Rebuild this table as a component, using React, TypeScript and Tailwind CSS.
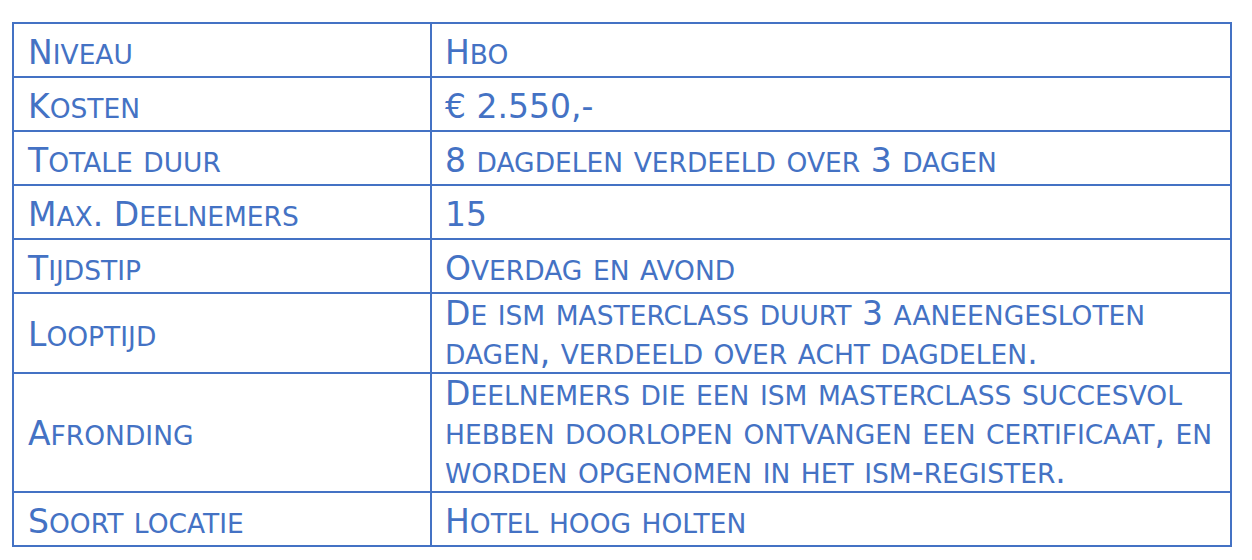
import React from 'react';

type Row = { label: string; value: string[]; tall?: boolean };

const rows: Row[] = [
  { label: 'Niveau', value: ['Hbo'] },
  { label: 'Kosten', value: ['€ 2.550,-'] },
  { label: 'Totale duur', value: ['8 dagdelen verdeeld over 3 dagen'] },
  { label: 'Max. Deelnemers', value: ['15'] },
  { label: 'Tijdstip', value: ['Overdag en avond'] },
  {
    label: 'Looptijd',
    value: ['De ism masterclass duurt 3 aaneengesloten', 'dagen, verdeeld over acht dagdelen.'],
    tall: true,
  },
  {
    label: 'Afronding',
    value: [
      'Deelnemers die een ism masterclass succesvol',
      'hebben doorlopen ontvangen een certificaat, en',
      'worden opgenomen in het ism-register.',
    ],
    tall: true,
  },
  { label: 'Soort locatie', value: ['Hotel hoog holten'] },
];

// word-style small caps: lowercase letters become smaller capitals
const SmallCaps: React.FC<{ text: string }> = ({ text }) => {
  const parts = text.split(/([a-z]+)/);
  return (
    <>
      {parts.map((p, i) =>
        /^[a-z]+$/.test(p) ? (
          <span key={i} className="text-[26.5px] leading-none uppercase">
            {p}
          </span>
        ) : (
          <React.Fragment key={i}>{p}</React.Fragment>
        )
      )}
    </>
  );
};

const App: React.FC = () => {
  return (
    <div className="min-h-screen bg-white pt-[22px] pl-[12px] font-['DejaVu_Sans',Verdana,sans-serif] text-[#4472C4]">
      <table className="w-[1220px] border-collapse border-2 border-[#4472C4] text-[33px] leading-[39px]">
        <tbody>
          {rows.map(row => (
            <tr key={row.label} className={row.tall ? '' : 'h-[54px]'}>
              <td className="w-[418px] border-2 border-[#4472C4] pl-[14px] align-middle">
                <div className={row.tall ? 'pt-[2px]' : 'pt-[5px]'}>
                  <SmallCaps text={row.label} />
                </div>
              </td>
              <td className="border-2 border-[#4472C4] pl-[13px] align-middle">
                <div className={row.tall ? 'pt-[0px]' : 'pt-[5px]'}>
                  {row.value.map(line => (
                    <div key={line} className="whitespace-nowrap">
                      <SmallCaps text={line} />
                    </div>
                  ))}
                </div>
              </td>
            </tr>
          ))}
        </tbody>
      </table>
    </div>
  );
};

export default App;
